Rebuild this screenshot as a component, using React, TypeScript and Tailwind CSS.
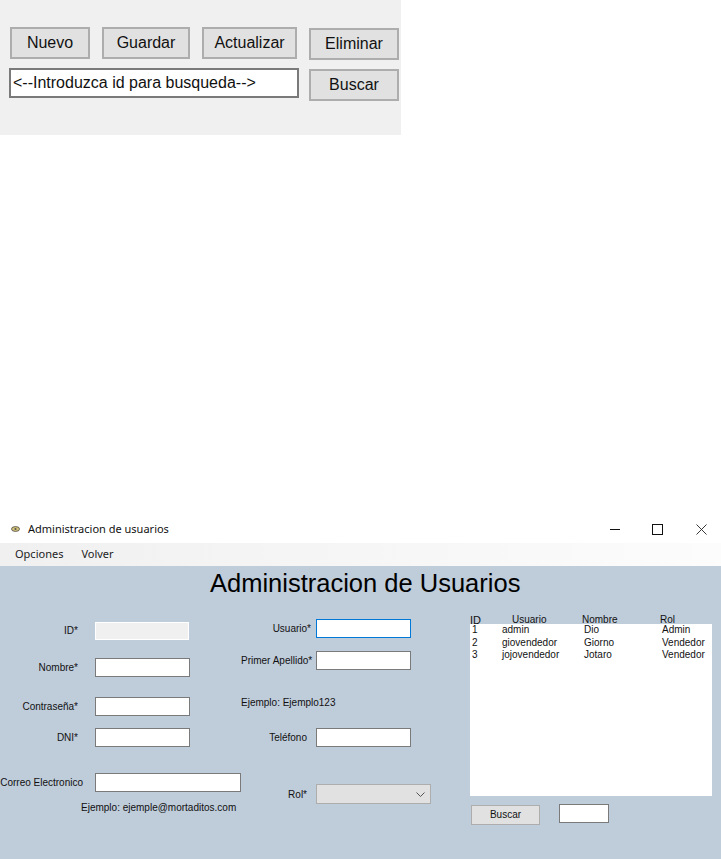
const sans = "font-['Liberation_Sans',Arial,sans-serif]";
const segoe = "font-['Noto_Sans',sans-serif]";

const users = [
  { id: "1", usuario: "admin", nombre: "Dio", rol: "Admin" },
  { id: "2", usuario: "giovendedor", nombre: "Giorno", rol: "Vendedor" },
  { id: "3", usuario: "jojovendedor", nombre: "Jotaro", rol: "Vendedor" },
];

function ToolButton({ label, className }: { label: string; className: string }) {
  return (
    <button
      type="button"
      className={`h-[32px] border-2 border-[#adadad] bg-[#e1e1e1] text-[16px] text-[#111] ${className}`}
    >
      {label}
    </button>
  );
}

function Box({ className = "" }: { className?: string }) {
  return <div className={`h-[19px] border border-[#7a7a7a] bg-white ${className}`} />;
}

function Field({
  label,
  labelWidth,
  top,
  children,
}: {
  label: string;
  labelWidth: string;
  top: string;
  children: React.ReactNode;
}) {
  return (
    <div className={`flex items-center ${top}`}>
      <span className={`${labelWidth} whitespace-nowrap text-right text-[10px] leading-[12px] text-[#111]`}>
        {label}
      </span>
      {children}
    </div>
  );
}

function WindowControls() {
  return (
    <div className="flex items-center">
      <svg width="10" height="10" viewBox="0 0 10 10" className="ml-0">
        <path d="M0 5.5H10" stroke="#111" strokeWidth="1" />
      </svg>
      <svg width="11" height="11" viewBox="0 0 11 11" className="ml-[32px]">
        <rect x="0.5" y="0.5" width="10" height="10" fill="none" stroke="#111" />
      </svg>
      <svg width="11" height="11" viewBox="0 0 11 11" className="ml-[33px] mr-[14px]">
        <path d="M0.5 0.5L10.5 10.5M10.5 0.5L0.5 10.5" stroke="#222" strokeWidth="0.9" />
      </svg>
    </div>
  );
}

export default function App() {
  return (
    <div className={`flex h-[859px] w-[721px] flex-col overflow-hidden bg-white ${sans}`}>
      {/* panel de busqueda */}
      <div className="flex h-[135px] w-[401px] shrink-0 bg-[#f0f0f0] pl-[9px] pt-[27px]">
        <div className="w-[290px]">
          <div className="flex pl-px">
            <ToolButton label="Nuevo" className="w-[80px]" />
            <ToolButton label="Guardar" className="ml-[12px] w-[88px]" />
            <ToolButton label="Actualizar" className="ml-[12px] w-[95px]" />
          </div>
          <div className="mt-[9px] flex h-[30px] items-center border-2 border-[#7a7a7a] bg-white pl-[2px] text-[16px] text-[#111]">
            {"<--Introduzca id para busqueda-->"}
          </div>
        </div>
        <div className="ml-[10px] flex flex-col pt-px">
          <ToolButton label="Eliminar" className="w-[90px]" />
          <ToolButton label="Buscar" className="mt-[9px] w-[90px]" />
        </div>
      </div>

      <div className="h-[380px] shrink-0" />

      {/* barra de titulo */}
      <div className={`flex h-[28px] shrink-0 items-center justify-between bg-white pl-[11px] ${segoe}`}>
        <div className="flex items-center">
          <svg width="9" height="6" viewBox="0 0 9 6">
            <ellipse cx="4.5" cy="3" rx="4" ry="2.4" fill="#d9c77a" stroke="#444" strokeWidth="0.8" />
            <circle cx="4.5" cy="3" r="1.1" fill="#555" />
          </svg>
          <span className="ml-[8px] text-[11px] text-[#111]">Administracion de usuarios</span>
        </div>
        <WindowControls />
      </div>

      {/* menu */}
      <div
        className={`flex h-[23px] shrink-0 items-center bg-gradient-to-r from-[#f0f0f0] to-[#fcfcfc] pl-[15px] text-[11px] text-[#222] ${segoe}`}
      >
        <span>Opciones</span>
        <span className="ml-[18px]">Volver</span>
      </div>

      {/* formulario */}
      <div className="flex min-h-0 flex-1 flex-col bg-[#bfccda]">
        <h1 className="h-[36px] pl-[210px] text-[25.5px] leading-[34px] text-black">Administracion de Usuarios</h1>

        <div className="flex">
          <div className="w-[241px] pt-[20px]">
            <Field label="ID*" labelWidth="w-[78px]" top="">
              <div className="ml-[17px] h-[18px] w-[94px] border border-white bg-[#f0f0f0]" />
            </Field>
            <Field label="Nombre*" labelWidth="w-[78px]" top="mt-[18px]">
              <Box className="ml-[17px] w-[95px]" />
            </Field>
            <Field label="Contraseña*" labelWidth="w-[78px]" top="mt-[20px]">
              <Box className="ml-[17px] w-[95px]" />
            </Field>
            <Field label="DNI*" labelWidth="w-[78px]" top="mt-[12px]">
              <Box className="ml-[17px] w-[95px]" />
            </Field>
            <Field label="Correo Electronico" labelWidth="w-[83px]" top="mt-[26px]">
              <Box className="ml-[12px] w-[146px]" />
            </Field>
            <p className="ml-[81px] mt-[10px] whitespace-nowrap text-[10px] leading-[12px] text-[#111]">
              Ejemplo: ejemple@mortaditos.com
            </p>
          </div>

          <div className="w-[229px] pt-[17px]">
            <Field label="Primer Apellido*" labelWidth="w-[70px]" top="hidden">
              <span />
            </Field>
            <Field label="Usuario*" labelWidth="w-[70px]" top="">
              <Box className="ml-[5px] w-[95px] border-[#0078d7]" />
            </Field>
            <Field label="Primer Apellido*" labelWidth="w-[70px]" top="mt-[13px]">
              <Box className="ml-[5px] w-[95px]" />
            </Field>
            <p className="mt-[27px] whitespace-nowrap text-[10px] leading-[12px] text-[#111]">Ejemplo: Ejemplo123</p>
            <Field label="Teléfono" labelWidth="w-[66px]" top="mt-[19px]">
              <Box className="ml-[9px] w-[95px]" />
            </Field>
            <div className="mt-[37px] flex items-center">
              <span className="w-[66px] text-right text-[10px] text-[#111]">Rol*</span>
              <div className="ml-[9px] flex h-[20px] w-[115px] items-center justify-end border border-[#adadad] bg-[#e1e1e1] pr-[5px]">
                <svg width="9" height="5" viewBox="0 0 9 5">
                  <path d="M0.5 0.5L4.5 4.5L8.5 0.5" fill="none" stroke="#555" />
                </svg>
              </div>
            </div>
          </div>

          <div className="w-[251px] pt-[12px] text-[10px] leading-[12px] text-[#111]">
            <div className="flex h-[10px]">
              <span className="w-[42px] text-[11px]">ID</span>
              <span className="w-[70px]">Usuario</span>
              <span className="w-[78px]">Nombre</span>
              <span>Rol</span>
            </div>
            <div className="h-[172px] w-[242px] bg-white pl-[2px]">
              {users.map((user) => (
                <div key={user.id} className="flex h-[12.5px]">
                  <span className="w-[30px]">{user.id}</span>
                  <span className="w-[82px]">{user.usuario}</span>
                  <span className="w-[78px]">{user.nombre}</span>
                  <span>{user.rol}</span>
                </div>
              ))}
            </div>
            <div className="mt-[8px] flex items-start pl-px">
              <button
                type="button"
                className="mt-px h-[20px] w-[69px] border border-[#adadad] bg-[#e1e1e1] text-[10px] text-[#111]"
              >
                Buscar
              </button>
              <Box className="ml-[19px] w-[50px]" />
            </div>
          </div>
        </div>
      </div>
    </div>
  );
}
